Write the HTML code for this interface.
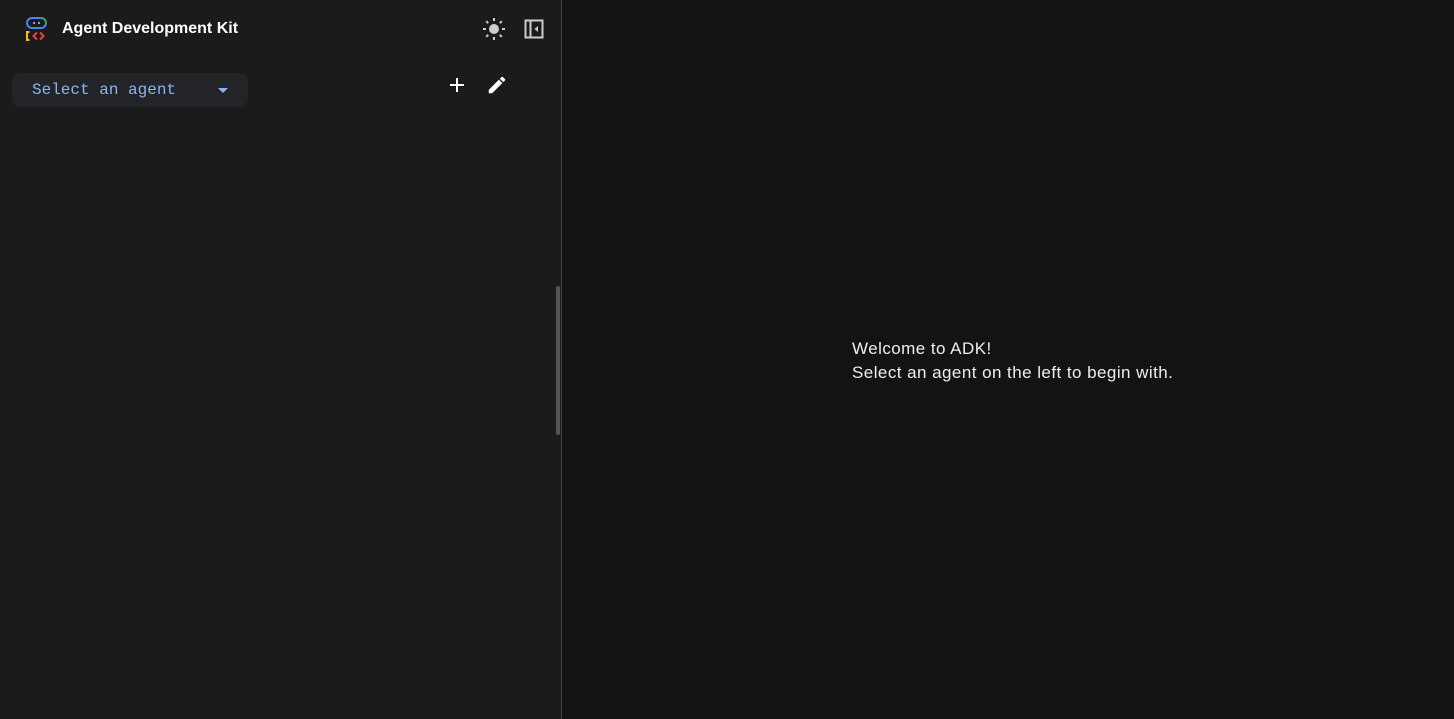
<!DOCTYPE html>
<html><head><style>
body{margin:0;width:1454px;height:719px;background:#131313;font-family:"Liberation Sans",sans-serif;overflow:hidden;position:relative}
.side{position:absolute;left:0;top:0;width:561px;height:719px;background:#1b1b1b;border-right:1px solid #444}
.title{position:absolute;left:62px;top:20px;color:#fff;font-size:16px;font-weight:bold;letter-spacing:0px}
.sel{position:absolute;left:12px;top:73px;width:236px;height:34px;background:#232427;border-radius:8px}
.sel span{position:absolute;left:20px;top:8px;font-family:"Liberation Mono",monospace;color:#8ab4f8;font-size:16px}
.sel i{position:absolute;left:206px;top:15px;border-left:5px solid transparent;border-right:5px solid transparent;border-top:5px solid #8ab4f8}
.scroll{position:absolute;left:556px;top:286px;width:4px;height:149px;background:#555;border-radius:2px}
.welcome{position:absolute;left:852px;top:337px;color:#eee;font-size:17px;letter-spacing:0.45px;line-height:24px}
</style></head><body>
<div class="side">
<svg style="position:absolute;left:25px;top:16px" width="24" height="26" viewBox="0 0 24 26">
<rect x="2" y="2" width="19" height="10" rx="5" fill="none" stroke="#4285f4" stroke-width="2"/>
<path d="M16 2a5 5 0 0 1 5 5" fill="none" stroke="#34a853" stroke-width="2"/>
<circle cx="9" cy="7" r="1.1" fill="#8ab4f8"/><circle cx="14" cy="7" r="1.1" fill="#8ab4f8"/>
<path d="M4.5 16h-2.5v8h2.5" fill="none" stroke="#fbbc04" stroke-width="2"/>
<path d="M12 16.5l-3.5 3.5 3.5 3.5M15 16.5l3.5 3.5-3.5 3.5" fill="none" stroke="#ea4335" stroke-width="2"/>
</svg>
<div class="title">Agent Development Kit</div>
<svg style="position:absolute;left:482px;top:17px" width="24" height="24" viewBox="0 0 24 24"><circle cx="12" cy="12" r="5" fill="#ccc"/><g stroke="#ccc" stroke-width="2"><path d="M12 1v3M12 20v3M1 12h3M20 12h3M4.2 4.2l2 2M17.8 17.8l2 2M4.2 19.8l2-2M17.8 6.2l2-2"/></g></svg>
<svg style="position:absolute;left:524px;top:19px" width="20" height="20" viewBox="0 0 20 20"><rect x="1.5" y="1.5" width="17" height="17" fill="none" stroke="#ccc" stroke-width="2"/><path d="M6.5 2v16" stroke="#ccc" stroke-width="2"/><path d="M14 7l-3.5 3 3.5 3z" fill="#ccc"/></svg>
<div class="sel"><span>Select an agent</span><i></i></div>
<svg style="position:absolute;left:449px;top:77px" width="16" height="16"><path d="M8 1v14M1 8h14" stroke="#fff" stroke-width="2"/></svg>
<svg style="position:absolute;left:486px;top:74px" width="22" height="22" viewBox="0 0 24 24"><path d="M3 17.25V21h3.75L17.81 9.94l-3.75-3.75L3 17.25zM20.71 7.04a1 1 0 0 0 0-1.41l-2.34-2.34a1 1 0 0 0-1.41 0l-1.830 1.83 3.75 3.75 1.83-1.83z" fill="#fff"/></svg>
<div class="scroll"></div>
</div>
<div class="welcome">Welcome to ADK!<br>Select an agent on the left to begin with.</div>
</body></html>
